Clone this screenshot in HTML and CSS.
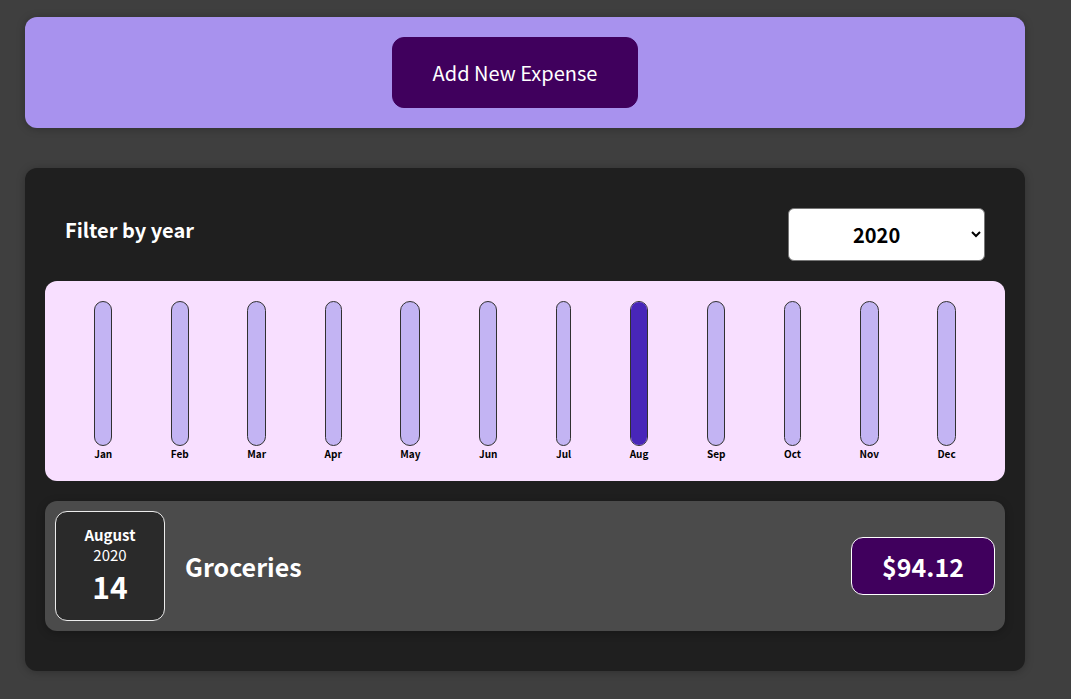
FILE: index.html
```html
<!DOCTYPE html>
<html lang="en">
<head>
<meta charset="utf-8">
<title>Expenses</title>
<link rel="stylesheet" href="styles.css">
</head>
<body>
<div class="new-expense">
  <button class="btn" type="button">Add New Expense</button>
</div>
<div class="expenses">
  <div class="expenses-filter">
    <div class="expenses-filter__control">
      <label>Filter by year</label>
      <select>
        <option>2022</option>
        <option>2021</option>
        <option selected>2020</option>
        <option>2019</option>
      </select>
    </div>
  </div>
  <div class="chart">
    <div class="chart-bar"><div class="chart-bar__inner"><div class="chart-bar__fill" style="height:0%"></div></div><div class="chart-bar__label">Jan</div></div>
    <div class="chart-bar"><div class="chart-bar__inner"><div class="chart-bar__fill" style="height:0%"></div></div><div class="chart-bar__label">Feb</div></div>
    <div class="chart-bar"><div class="chart-bar__inner"><div class="chart-bar__fill" style="height:0%"></div></div><div class="chart-bar__label">Mar</div></div>
    <div class="chart-bar"><div class="chart-bar__inner"><div class="chart-bar__fill" style="height:0%"></div></div><div class="chart-bar__label">Apr</div></div>
    <div class="chart-bar"><div class="chart-bar__inner"><div class="chart-bar__fill" style="height:0%"></div></div><div class="chart-bar__label">May</div></div>
    <div class="chart-bar"><div class="chart-bar__inner"><div class="chart-bar__fill" style="height:0%"></div></div><div class="chart-bar__label">Jun</div></div>
    <div class="chart-bar"><div class="chart-bar__inner"><div class="chart-bar__fill" style="height:0%"></div></div><div class="chart-bar__label">Jul</div></div>
    <div class="chart-bar"><div class="chart-bar__inner"><div class="chart-bar__fill" style="height:100%"></div></div><div class="chart-bar__label">Aug</div></div>
    <div class="chart-bar"><div class="chart-bar__inner"><div class="chart-bar__fill" style="height:0%"></div></div><div class="chart-bar__label">Sep</div></div>
    <div class="chart-bar"><div class="chart-bar__inner"><div class="chart-bar__fill" style="height:0%"></div></div><div class="chart-bar__label">Oct</div></div>
    <div class="chart-bar"><div class="chart-bar__inner"><div class="chart-bar__fill" style="height:0%"></div></div><div class="chart-bar__label">Nov</div></div>
    <div class="chart-bar"><div class="chart-bar__inner"><div class="chart-bar__fill" style="height:0%"></div></div><div class="chart-bar__label">Dec</div></div>
  </div>
  <ul class="expenses-list">
    <li class="expense-item">
      <div class="expense-date">
        <div class="expense-date__month">August</div>
        <div class="expense-date__year">2020</div>
        <div class="expense-date__day">14</div>
      </div>
      <div class="expense-item__description">
        <h2>Groceries</h2>
        <div class="expense-item__price">$94.12</div>
      </div>
    </li>
  </ul>
</div>
</body>
</html>
```
FILE: styles.css
```css
* { box-sizing: border-box; }
html { font-size: 20px; }
body {
  margin: 0;
  background-color: #3f3f3f;
  font-family: "Noto Sans CJK JP", "Noto Sans", sans-serif;
  font-size: 20px;
  padding-top: 17px;
  padding-bottom: 29px;
}
.new-expense {
  background-color: #a892ee;
  padding: 20px;
  margin: 0 0 40px 25px;
  width: 1000px;
  border-radius: 12px;
  text-align: center;
  box-shadow: 0 1px 8px rgba(0, 0, 0, 0.25);
}
.btn {
  font: inherit;
  cursor: pointer;
  padding: 20px 40px;
  border: 1px solid #40005d;
  background-color: #40005d;
  color: white;
  border-radius: 12px;
  margin-right: 20px;
  line-height: 29px;
}
.expenses {
  padding: 20px;
  background-color: #1f1f1f;
  margin: 0 0 0 25px;
  width: 1000px;
  border-radius: 12px;
  box-shadow: 0 1px 8px rgba(0, 0, 0, 0.25);
}
.expenses-filter {
  color: white;
  padding: 0 20px;
}
.expenses-filter__control {
  display: flex;
  width: 100%;
  align-items: center;
  justify-content: space-between;
  margin: 20px 0;
}
.expenses-filter label {
  font-weight: bold;
  margin-bottom: 10px;
}
.expenses-filter select {
  font: inherit;
  font-weight: bold;
  padding: 10px 56px 10px 60px;
  border-radius: 6px;
  height: 53px;
  width: 197px;
  background-color: #fff;
  color: #000;
  border: 1px solid #767676;
  text-align: left;
}
.chart {
  padding: 20px;
  border-radius: 12px;
  background-color: #f8dfff;
  text-align: center;
  display: flex;
  justify-content: space-around;
  height: 200px;
}
.chart-bar {
  height: 100%;
  display: flex;
  flex-direction: column;
  align-items: center;
}
.chart-bar__inner {
  height: 100%;
  width: 100%;
  border: 1px solid #313131;
  border-radius: 12px;
  background-color: #c3b4f3;
  overflow: hidden;
  display: flex;
  flex-direction: column;
  justify-content: flex-end;
}
.chart-bar__fill {
  background-color: #4826b9;
  width: 100%;
}
.chart-bar__label {
  font-weight: bold;
  font-size: 10px;
  line-height: 15px;
  text-align: center;
  color: #000;
}
.expenses-list {
  list-style: none;
  padding: 0;
  margin: 0;
}
.expense-item {
  display: flex;
  justify-content: space-between;
  align-items: center;
  box-shadow: 0 2px 8px rgba(0, 0, 0, 0.25);
  padding: 10px;
  margin: 20px 0;
  border-radius: 12px;
  background-color: #4b4b4b;
}
.expense-date {
  display: flex;
  flex-direction: column;
  width: 110px;
  height: 110px;
  border: 1px solid #ececec;
  background-color: #2a2a2a;
  color: white;
  border-radius: 12px;
  align-items: center;
  justify-content: center;
}
.expense-date__month {
  font-size: 15px;
  font-weight: bold;
  line-height: 21px;
}
.expense-date__year {
  font-size: 15px;
  line-height: 20px;
}
.expense-date__day {
  font-size: 30px;
  font-weight: bold;
  line-height: 43px;
}
.expense-item__description {
  display: flex;
  align-items: center;
  justify-content: flex-start;
  flex: 1;
}
.expense-item h2 {
  color: white;
  font-size: 25px;
  flex: 1;
  margin: 0 20px;
}
.expense-item__price {
  font-size: 25px;
  font-weight: bold;
  color: white;
  background-color: #40005d;
  border: 1px solid white;
  padding: 10px 30px;
  border-radius: 12px;
  line-height: 36px;
}
```
